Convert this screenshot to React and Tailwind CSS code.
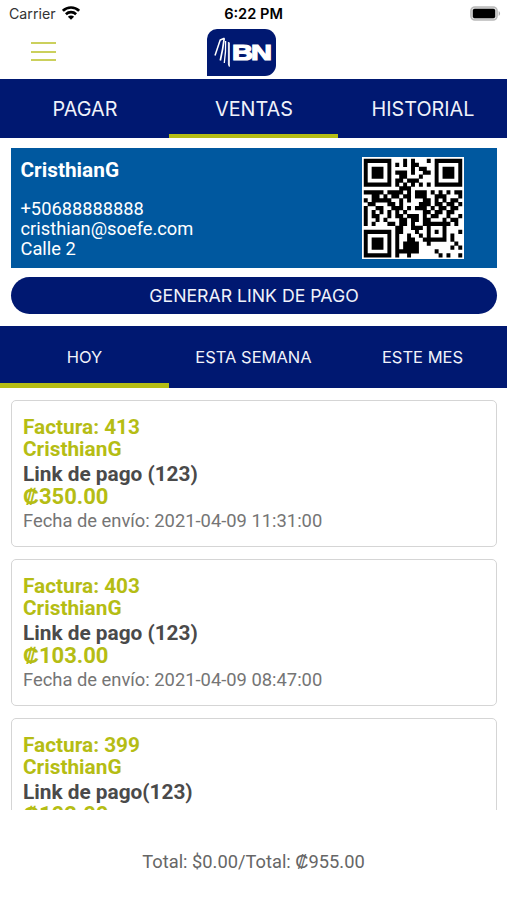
import React, { useState } from 'react';

const QR_ROWS = [
  '1111111000101000101111111',
  '1000001010101100001000001',
  '1011101000001011001011101',
  '1011101011101001101011101',
  '1011101001100010001011101',
  '1000001011011100001000001',
  '1111111010101010101111111',
  '0000000001110000000000000',
  '1111101111010111010101011',
  '0011010110110111001110001',
  '1011111001010001101010110',
  '0110001101000011101101101',
  '1001100111010111010110110',
  '1010101010100001101101100',
  '1011001011011101011001001',
  '1001010001101101100010110',
  '1010001101101001111111010',
  '0000000011001110100010000',
  '1111111011000100101010001',
  '1000001010010010100010100',
  '1011101010011001111110100',
  '1011101010111100100000010',
  '1011101010111100000000101',
  '1000001011111100001000000',
  '1111111010010000000101001',
];

const sales = [
  { id: 413, name: 'CristhianG', detail: 'Link de pago (123)', amount: '₡350.00', date: '2021-04-09 11:31:00' },
  { id: 403, name: 'CristhianG', detail: 'Link de pago (123)', amount: '₡103.00', date: '2021-04-09 08:47:00' },
  { id: 399, name: 'CristhianG', detail: 'Link de pago(123)', amount: '₡102.00', date: '2021-04-09 08:31:00' },
];

// One path for all dark modules, so no seams show between neighbours
const qrPath = QR_ROWS.map((row, y) =>
  [...row.matchAll(/1+/g)].map((run) => `M${run.index} ${y}h${run[0].length}v1.08h-${run[0].length}z`).join('')
).join('');

const QrCode = () => (
  <svg viewBox="-0.45 -0.45 25.9 25.9" className="h-[102px] w-[102px] bg-white">
    <path d={qrPath} />
  </svg>
);

const Logo = () => (
  <svg viewBox="0 0 69 47" className="h-[47px] w-[69px]">
    <path d="M0 47V10A10 10 0 0 1 10 0H58A11 11 0 0 1 69 11V36A11 11 0 0 1 58 47Z" fill="#001871" />
    <g fill="none" stroke="#fff" strokeLinejoin="round">
      <path d="M8 26.500L13.200 11L17.500 9.200" strokeWidth="1.500" />
      <path d="M17.200 9.300Q16 20 13.300 31.500" strokeWidth="1.700" />
      <path d="M18.600 12Q19 22 17.300 34" strokeWidth="1.300" />
      <path d="M21.400 13V35L22.300 37.500V13.500" strokeWidth="1" />
    </g>
    <text
      x="25"
      y="31"
      textLength="38"
      lengthAdjust="spacingAndGlyphs"
      fill="#fff"
      stroke="#fff"
      strokeWidth="1.200"
      className="font-['Liberation_Sans',sans-serif] text-[22px] font-bold tracking-[-1.5px]"
    >
      BN
    </text>
  </svg>
);

const StatusBar = () => (
  <div className="grid h-[27px] grid-cols-3 items-center px-[9px] font-['Inter',sans-serif] text-black">
    <div className="flex items-center gap-1.5 text-[14.2px] text-[#333]">
      <span className="pt-px">Carrier</span>
      <svg viewBox="0 0 18 14" className="h-[14px] w-[18px]">
        <g fill="none" stroke="#000" strokeWidth="2.600">
          <path d="M0.900 4.800A11.500 11.500 0 0 1 17.100 4.800" />
          <path d="M3.900 8.200A7.300 7.300 0 0 1 14.100 8.200" />
        </g>
        <path d="M9 13.700L5.900 10.700A4.400 4.400 0 0 1 12.100 10.700Z" />
      </svg>
    </div>
    <div className="pt-[2px] text-center text-[14.6px] font-semibold">6:22 PM</div>
    <div className="flex justify-end">
      <svg viewBox="0 0 31 15" className="-mr-[3px] h-[15px] w-[31px]">
        <rect x="0.900" y="0.900" width="26.200" height="13.200" rx="4" fill="#ddd" stroke="#b9b9b9" strokeWidth="1.500" />
        <rect x="2.800" y="2.800" width="22.400" height="9.400" rx="1.800" />
        <path d="M28.700 5A3 3 0 0 1 28.700 10Z" fill="#aaa" />
      </svg>
    </div>
  </div>
);

const Tabs = ({ items, active, onChange, className, tabClassName }) => (
  <div className={`grid shrink-0 grid-cols-3 bg-[#001871] font-['Inter',sans-serif] text-[#f0f2fa] ${className}`}>
    {items.map((item) => (
      <button
        key={item}
        onClick={() => onChange(item)}
        className={`${tabClassName} ${active === item ? 'border-[#b5bd14]' : 'border-transparent'}`}
      >
        {item}
      </button>
    ))}
  </div>
);

const SaleCard = ({ sale }) => (
  <div className="h-[147px] shrink-0 rounded-[5px] border border-[#d5d5d5] px-[11px] pt-[15px] text-[20.8px] leading-[22px] font-bold text-[#b5bd14]">
    <p>Factura: {sale.id}</p>
    <p>{sale.name}</p>
    <p className="mt-[3px] text-[#4a4a4a]">{sale.detail}</p>
    <p className="mt-px text-[22px]">{sale.amount}</p>
    <p className="mt-[2px] text-[18.35px] font-normal text-[#757575]">Fecha de envío: {sale.date}</p>
  </div>
);

export default function App() {
  const [section, setSection] = useState('VENTAS');
  const [period, setPeriod] = useState('HOY');

  return (
    <div className="flex h-[900px] w-[507px] flex-col overflow-hidden bg-white font-['Roboto',sans-serif]">
      <StatusBar />
      <header className="grid h-[52px] shrink-0 grid-cols-3 pt-[2px]">
        <button aria-label="Menu" className="flex flex-col gap-[6.5px] pt-[13px] pl-[31px]">
          <span className="h-[2px] w-[25px] bg-[#cbd05c]" />
          <span className="h-[2px] w-[25px] bg-[#cbd05c]" />
          <span className="h-[2px] w-[25px] bg-[#cbd05c]" />
        </button>
        <div className="pl-[38px]">
          <Logo />
        </div>
      </header>

      <Tabs
        items={['PAGAR', 'VENTAS', 'HISTORIAL']}
        active={section}
        onChange={setSection}
        className="h-[59px] text-[19.8px]"
        tabClassName="border-b-[4px] pt-[7px] pl-[1px]"
      />

      {/* Merchant info */}
      <section className="mr-[10px] ml-[11px] mt-[10px] flex h-[120px] shrink-0 justify-between bg-[#00589f] pr-[33px] pl-[9.5px] text-white">
        <div className="pt-[11px] text-[18.3px] leading-[20px]">
          <p className="mb-[18px] text-[20.8px] leading-[22px] font-bold">CristhianG</p>
          <p>+50688888888</p>
          <p>cristhian@soefe.com</p>
          <p>Calle 2</p>
        </div>
        <div className="pt-[9px]">
          <QrCode />
        </div>
      </section>

      <button className="mr-[10px] ml-[11px] mt-[9px] h-[37px] shrink-0 rounded-full bg-[#001871] pt-px font-['Inter',sans-serif] text-[17.7px] text-[#f0f2fa]">
        GENERAR LINK DE PAGO
      </button>

      <Tabs
        items={['HOY', 'ESTA SEMANA', 'ESTE MES']}
        active={period}
        onChange={setPeriod}
        className="mt-[12px] h-[62px] text-[16.5px]"
        tabClassName="border-b-[5px] pt-[6px]"
      />

      <main className="flex h-[422px] shrink-0 flex-col gap-[12px] overflow-hidden pr-[10px] pl-[11px] pt-[12px]">
        {sales.map((sale) => (
          <SaleCard key={sale.id} sale={sale} />
        ))}
      </main>

      <footer className="flex flex-1 items-center justify-center pt-[14px] text-[18.3px] text-[#666]">
        Total: $0.00/Total: ₡955.00
      </footer>
    </div>
  );
}
